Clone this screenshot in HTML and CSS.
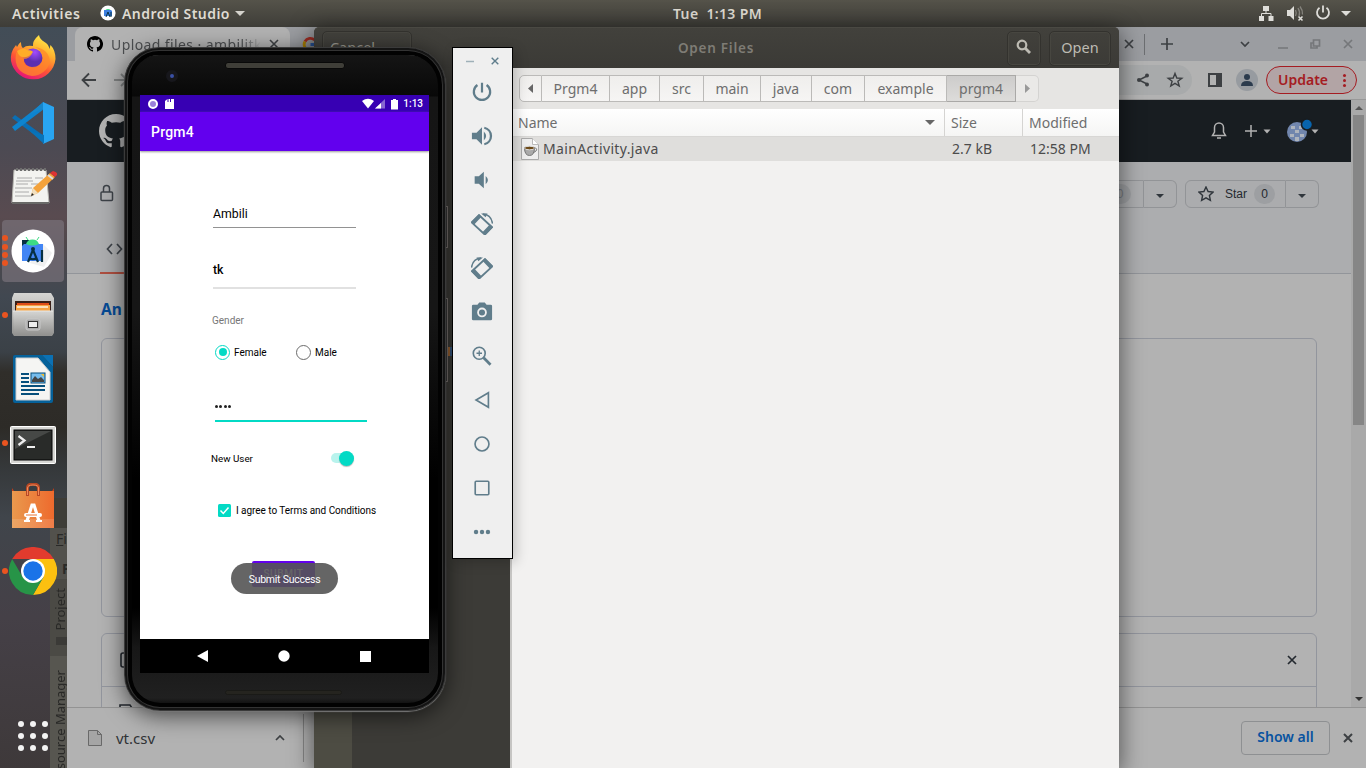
FILE: index.html
```html
<!DOCTYPE html>
<html lang="en">
<head>
<meta charset="utf-8">
<title>Desktop</title>
<link rel="stylesheet" href="styles.css">
</head>
<body>
<div class="desktop">

  <header class="topbar">
    <span class="activities">Activities</span>
    <svg class="app-ico" width="16" height="16" viewBox="0 0 16 16"><circle cx="8" cy="8" r="7.6" fill="#fff"/><path d="M4 5h7l1 1v5H4z" fill="#3d7fe0"/><path d="M5.5 5a3 2.5 0 0 1 5 0z" fill="#3ddc84"/><path d="M6 12l2-5 2 5M11 7v5" stroke="#073042" fill="none"/></svg>
    <span class="appname">Android Studio</span>
    <svg class="caret" width="10" height="5"><path d="M0 0h10L5 5z" fill="#d5d3cd"/></svg>
    <span class="clock">Tue&nbsp; 1:13 PM</span>
    <svg class="tray" width="100" height="20" viewBox="1254 3 100 20" fill="#deddd9" stroke="none">
      <path d="M1263 6h6v5h-6zM1259 16h5v5h-5zM1268.500 16h5v5h-5z"/><path d="M1266 11v3M1261.500 16v-2.500h9.500V16" fill="none" stroke="#deddd9"/>
      <path d="M1287 10h3l4-4v14l-4-4h-3z"/><path d="M1295.500 10q1.500 3 0 6M1298 8q2.500 4 1 8M1300 6.500q3 4 2.500 8" fill="none" stroke="#85837d" stroke-width="1.300"/><path d="M1298.500 16.500l4 4M1302.500 16.500l-4 4" stroke="#deddd9" stroke-width="1.600"/>
      <path d="M1319.500 7.800a6 6 0 1 0 7 0M1323 5.500v7" fill="none" stroke="#deddd9" stroke-width="1.800"/><path d="M1341 11h10l-5 5z"/>
    </svg>
  </header>

  <section class="ide">
    <span class="menu"><u>F</u>ile</span>
    <b class="crumb">P</b>
    <div class="side"><span class="vert project">Project</span><i class="folder"></i></div>
    <div class="side2"><span class="vert">Resource Manager</span></div>
  </section>

  <nav class="dock">
    <div class="slot"><svg viewBox="9 35 48 48"><defs><linearGradient id="ff" x1=".8" y1="0" x2=".3" y2="1"><stop offset="0" stop-color="#fff44f"/><stop offset=".35" stop-color="#ffb02e"/><stop offset=".65" stop-color="#ff5634"/><stop offset="1" stop-color="#e3107c"/></linearGradient><radialGradient id="ffp" cx=".6" cy=".2"><stop offset="0" stop-color="#a44bff"/><stop offset="1" stop-color="#5b2fb0"/></radialGradient></defs><path d="M39 35q-7 6-6 11-7-1-10 2-2-1-2-6-2 1-4 5l-1-2q-6 7-5 16a22.500 22.500 0 0 0 44.500-2q0-9-5-14l-1 4q-1-5-5-7-5-3-5.500-7z" fill="url(#ff)"/><circle cx="33" cy="58" r="9.500" fill="url(#ffp)"/><path d="M16 53q5-4 9-1 5 0 7 2-3 5-8 5-1 7 8 8 9 0 11-9-1-8-8-11 14 2 15 15a19 19 0 0 1-18 14Q13 73 16 53z" fill="#ff8a2a" opacity=".75"/><path d="M17 51q6-4 10-1 5 0 6 2-4 6-10 5-4 0-6-6z" fill="#ffad28"/></svg></div>
    <div class="slot"><svg viewBox="9 99 48 48"><path d="M12 118l3-3 29 21v6z" fill="#0a6fb5"/><path d="M12 127l3 4 29-22v-7z" fill="#0d84cf"/><path d="M43 102l11 5v32l-11 5z" fill="#29a5f1"/><path d="M43 102L30 114l13-5z" fill="#1687cc"/><path d="M30 131l14 13v-9z" fill="#0874ba"/></svg></div>
    <div class="slot"><svg viewBox="9 163 48 48"><path d="M14 170h32l3 33H12z" fill="#f3f3f0" stroke="#b7b7b1"/><path d="M12 203h37" stroke="#696967" stroke-width="2"/><path d="M17 171v-4M21 171v-4M25 171v-4M29 171v-4M33 171v-4M37 171v-4M41 171v-4M45 171v-4" stroke="#6d6d6d" stroke-width="2" stroke-dasharray="3 1"/><path d="M17 178h15m3 0h8M16 181h17M16 184h12m3 0h7M15 188h17M15 192h14M15 196h17" stroke="#aaa"/><path d="M31 196l2-8 17-15 5 4-17 16z" fill="#f3a23b"/><path d="M31 196l2-8 5 5z" fill="#f1dfbf"/><path d="M50 173l3-2q5 1 4 4l-2 2z" fill="#d33"/><path d="M48 175l5 4" stroke="#ddd" stroke-width="2"/><path d="M31 196l1-3 2 2z" fill="#222"/></svg></div>
    <div class="slot active"><i class="pips four"></i><svg viewBox="9 227 48 48"><circle cx="33" cy="251" r="21.500" fill="#fff"/><path d="M43 244l9 9-8 14-14-4z" fill="#f0f0f0"/><path d="M22 240h7l2 3-4 8-5-2z" fill="#073042"/><path d="M22 246l2-2h19v17H22z" fill="#4285f4"/><path d="M26 244a7 7 0 0 1 13 0q-7 3-13 0z" fill="#3ddc84"/><path d="M28 240l-2-3M37 240l2-3" stroke="#3ddc84"/><path d="M28 262l4.500-11h1l4.500 11M29 258q4 2.500 8 0M42 250v12" fill="none" stroke="#073042" stroke-width="2.200"/><circle cx="33" cy="249" r="2" fill="#073042"/></svg></div>
    <div class="slot"><i class="pips"></i><svg viewBox="9 291 48 48"><defs><linearGradient id="cab" x2="0" y2="1"><stop stop-color="#d5d5d3"/><stop offset="1" stop-color="#929290"/></linearGradient></defs><path d="M14 293h37l3 5v35l-2 3H14l-2-3v-35z" fill="url(#cab)"/><path d="M15 301h36v10H15z" fill="#3a2018"/><path d="M17 303h32v8H17z" fill="#df4d18"/><path d="M16 305h34v6H16z" fill="#f6a344"/><path d="M17 306h31v2H17z" fill="#fbe1bc"/><path d="M13 311h40v24H14z" fill="url(#cab)"/><path d="M13 311h40" stroke="#e8e8e6"/><rect x="26" y="319" width="14" height="11" rx="2" fill="#aaa" stroke="#c8c8c8"/><rect x="28.500" y="321.500" width="9" height="6" fill="#eee" stroke="#333"/></svg></div>
    <div class="slot"><svg viewBox="9 355 48 48"><path d="M15 355h27l11 12v34q0 2-2 2H15q-2 0-2-2v-44q0-2 2-2z" fill="#05619a"/><path d="M42 355h11v12z" fill="#0b71b4"/><path d="M16 358h22l12 14v28H16z" fill="#f5f5f3" stroke="#ccc"/><path d="M21 374h8M21 378h8M21 382h8M21 386h24M21 390h24M21 394h18" stroke="#064f7c" stroke-width="2"/><rect x="31" y="373" width="14" height="10" fill="#76bcec" stroke="#064f7c"/><path d="M32 382v-2l3-4 3 3 3-2 3 3v2z" fill="#444"/><path d="M41 374h3v3z" fill="#f4bd29"/></svg></div>
    <div class="slot"><i class="pips"></i><svg viewBox="9 418 48 48"><rect x="10.500" y="425.500" width="45" height="37" rx="1" fill="#d7d7d4" stroke="#fff"/><rect x="14" y="429" width="38" height="30" fill="#292b29" stroke="#050505"/><path d="M15 430h36L15 448z" fill="#464846"/><path d="M18.500 435l6 4.500-6 4.500" fill="none" stroke="#eee" stroke-width="2.200"/><path d="M27 446h8" stroke="#eee" stroke-width="2"/></svg></div>
    <div class="slot"><svg viewBox="9 482 48 48"><defs><linearGradient id="bag"><stop stop-color="#e9994e"/><stop offset="1" stop-color="#ee6a2d"/></linearGradient></defs><path d="M12 487l2 3h38l2-3v8H12z" fill="#c33d16"/><path d="M12 490h42v37H12z" fill="url(#bag)"/><path d="M12 518h42v9H12z" fill="#fff" opacity=".13"/><path d="M27.500 495v-8q0-4 5.500-4t5.500 4v8" fill="none" stroke="#b84824" stroke-width="3"/><path d="M27.500 494v-7q0-3 5.500-3t5.500 3v7" fill="none" stroke="#ef8b5b"/><path d="M27 520l5-16h2l5 16" fill="none" stroke="#fff" stroke-width="3.200"/><rect x="24" y="512" width="18" height="4" rx="2" fill="#fff"/><path d="M24 520h6m6 0h6" stroke="#fff" stroke-width="2"/><path d="M26 514h11" stroke="#e87437"/></svg></div>
    <div class="slot"><i class="pips"></i><svg viewBox="9 547 48 48"><path d="M12.200 559A24 24 0 0 1 53.800 559H33z" fill="#e23b2e"/><path d="M53.800 559A24 24 0 0 1 33 595l10.400-18L33 559z" fill="#fcc010"/><path d="M12.200 559A24 24 0 0 0 33 595l10.400-18H22.600z" fill="#279447"/><circle cx="33" cy="571" r="12" fill="#fff"/><circle cx="33" cy="571" r="9.700" fill="#1a73e8"/></svg></div>
    <div class="apps"><i></i><i></i><i></i><i></i><i></i><i></i><i></i><i></i><i></i></div>
  </nav>

  <section class="browser">
    <div class="tabs">
      <div class="tab"><svg width="16" height="16" viewBox="0 0 16 16"><use href="#octo"/></svg><span>Upload files · ambilitk</span><svg width="10" height="10"><path d="M1 1l8 8M9 1l-8 8" stroke="#3d4043" stroke-width="1.600"/></svg></div>
      <svg class="g" width="17" height="17" viewBox="0 0 17 17" fill="none" stroke-width="2.800"><path d="M3 5.500A6 6 0 0 1 12.500 4" stroke="#a82f25"/><path d="M3 5.500a6 6 0 0 0 0 6" stroke="#b08504"/><path d="M3 11.500a6 6 0 0 0 9.500 1" stroke="#23753a"/><path d="M8.500 8.500h6q0 3-2 4.500" stroke="#2d5dab"/></svg>
      <svg class="tabctl" width="247" height="34" viewBox="1119 27 247 34" fill="none" stroke="#3d4043" stroke-width="1.700"><path d="M1125 40l8 8M1133 40l-8 8"/><path d="M1144.500 34v21" stroke="#6c6e71" stroke-width="1"/><path d="M1161 44h12M1167 38v12M1241 42l4 4 4-4"/><path d="M1278 48h10M1344 40l8 8M1352 40l-8 8" stroke="#75777a"/><path d="M1313.500 40h6v6h-6zM1313 43h-2v5h6v-2" stroke="#75777a"/></svg>
    </div>
    <div class="tools">
      <svg width="60" height="38" viewBox="67 61 60 38" fill="none" stroke-width="1.800"><path d="M96 80H83M89 73.500L82.500 80l6.500 6.500" stroke="#3d4043"/><path d="M114 80h13M121 74l6 6-6 6" stroke="#7e8081"/></svg>
      <svg class="tool-right" width="142" height="38" viewBox="1119 61 142 38"><path d="M1119 65h58a15 15 0 0 1 0 30h-58z" fill="#a8aaab"/><path d="M1147 76l-8 4 8 4" stroke="#3d4043" fill="none" stroke-width="1.500"/><circle cx="1139" cy="80" r="2" fill="#3d4043"/><circle cx="1147" cy="75.500" r="2" fill="#3d4043"/><circle cx="1147" cy="84.500" r="2" fill="#3d4043"/><path d="M1175 73.500l1.800 4.500 5 .3-3.900 3 1.300 4.700-4.200-2.700-4.200 2.700 1.300-4.700-3.900-3 5-.3z" fill="none" stroke="#3d4043" stroke-width="1.400"/><path d="M1209 74h12v12h-12zM1217 74h4v12h-4z" fill="none" stroke="#3d4043" stroke-width="2"/><path d="M1217 74h4v12h-4z" fill="#3d4043"/><circle cx="1247" cy="80" r="11" fill="#979ba0"/><circle cx="1247" cy="77" r="3" fill="#2b3b4d"/><path d="M1241 86q0-5 6-5t6 5z" fill="#2b3b4d"/></svg>
      <span class="update">Update<i></i></span>
    </div>
    <div class="page">
      <div class="site">
        <div class="gh">
          <svg width="34" height="34" viewBox="0 0 16 16" fill="#b2b2b2"><path id="octo" d="M8 0C3.580 0 0 3.580 0 8c0 3.540 2.290 6.530 5.470 7.590.4.070.55-.17.55-.38 0-.19-.01-.82-.01-1.490-2.010.37-2.530-.49-2.690-.94-.09-.23-.48-.94-.82-1.130-.28-.15-.68-.52-.01-.53.630-.01 1.080.58 1.230.82.720 1.210 1.870.87 2.330.66.070-.52.280-.87.510-1.070-1.780-.2-3.640-.89-3.640-3.950 0-.87.310-1.590.82-2.150-.08-.2-.36-1.020.08-2.120 0 0 .67-.21 2.200.82a7.600 7.600 0 0 1 4 0c1.530-1.040 2.200-.82 2.200-.82.440 1.100.160 1.920.080 2.120.51.560.82 1.270.82 2.150 0 3.070-1.870 3.750-3.650 3.950.29.250.54.730.54 1.480 0 1.070-.01 1.930-.01 2.200 0 .21.150.46.550.38A8 8 0 0 0 8 0z"/></svg>
          <svg class="gh-right" width="120" height="40" viewBox="1204 111 120 40" fill="none" stroke="#b2b2b2" stroke-width="1.500"><path d="M1212.500 135.500h13l-2-3.500v-4.500a4.500 4.500 0 0 0-9 0v4.500zM1217 138h4"/><path d="M1245 131h12M1251 125v12"/><path d="M1263.500 129.500h7l-3.500 4zM1311.500 129.500h7l-3.500 4z" fill="#b2b2b2" stroke="none"/><circle cx="1297" cy="132" r="10" fill="#7186ad" stroke="none"/><path d="M1291 126h4v3h-4zM1299 126h4v3h-4zM1295 130h4v3h-4zM1290 134h4v3h-4zM1300 134h4v3h-4zM1295 137h4v4h-4z" fill="#aeb4bd" stroke="none"/><circle cx="1307" cy="124.500" r="5.500" fill="#0864ad" stroke="#181d21"/></svg>
        </div>
        <div class="repo">
          <div class="repo-top">
            <svg class="lock" width="14" height="18" fill="none" stroke="#3d4248" stroke-width="1.500"><rect x="1" y="8" width="11.500" height="8.500" rx="1"/><path d="M3.500 8V4.500a3 3 0 0 1 6 0V8"/></svg>
            <div class="btns"><div class="btn fork"><span class="pill">0</span></div><div class="btn drop"><i></i></div><div class="btn star"><svg width="16" height="16" viewBox="0 0 16 16" fill="none" stroke="#30363c" stroke-width="1.400"><path d="M8 1l2.100 4.500 4.900.6-3.600 3.300 1 4.900L8 11.900l-4.400 2.400 1-4.900L1 6.100l4.900-.6z"/></svg><span>Star</span><span class="pill">0</span></div><div class="btn drop"><i></i></div></div>
          </div>
          <div class="code"><svg width="18" height="12" fill="none" stroke="#3d4248" stroke-width="1.700"><path d="M6 1L1.500 6 6 11M11 1l4.500 5-4.500 5"/></svg></div>
        </div>
        <b class="owner">An</b>
        <div class="box drop-zone"></div>
        <div class="box notice"><div class="notice-row"><svg width="12" height="16" fill="none" stroke="#24292f" stroke-width="1.600"><rect x="1" y="1" width="13" height="14" rx="2"/></svg><svg width="10" height="10"><path d="M1 1l8 8M9 1l-8 8" stroke="#24292f" stroke-width="1.700"/></svg></div><svg class="file-top" width="14" height="4"><path d="M1 4V1h10l2 3" fill="none" stroke="#24292f" stroke-width="1.600"/></svg></div>
      </div>
      <div class="scroll"><i class="up"></i><b></b><i class="down"></i></div>
    </div>
    <div class="shelf">
      <svg width="14" height="16"><path d="M.5.500h9l4 4v11H.5z" fill="#a5a5a5" stroke="#696969"/><path d="M9.500.500v4h4" fill="none" stroke="#696969"/></svg>
      <span class="csv">vt.csv</span>
      <svg class="chev" width="10" height="6"><path d="M1 5l4-4 4 4" fill="none" stroke="#3d4043" stroke-width="1.700"/></svg><i class="rule"></i>
      <span class="showall">Show all</span>
      <svg class="close" width="10" height="10"><path d="M1 1l8 8M9 1l-8 8" stroke="#3d4043" stroke-width="2"/></svg>
    </div>
  </section>

  <section class="dialog">
    <div class="dhead"><span class="dbtn cancel">Cancel</span><b>Open Files</b><span class="dbtn find"><svg width="16" height="16" fill="none" stroke="#bdbbb3"><circle cx="6" cy="6" r="4.300" stroke-width="2.200"/><path d="M9 9l5 5" stroke-width="2.800"/></svg></span><span class="dbtn open">Open</span></div>
    <div class="dbody">
      <div class="strip"></div>
      <div class="files">
        <div class="path"><span class="w22"><svg width="5" height="9"><path d="M5 0v9L0 4.500z" fill="#666"/></svg></span><span class="w68">Prgm4</span><span class="w50">app</span><span class="w44">src</span><span class="w57">main</span><span class="w51">java</span><span class="w53">com</span><span class="w82">example</span><span class="w69 on">prgm4</span><span class="w22 last"><svg width="5" height="9"><path d="M0 0v9l5-4.500z" fill="#999"/></svg></span></div>
        <div class="cols"><span class="c1">Name<svg width="10" height="5"><path d="M0 0h10L5 5z" fill="#666"/></svg></span><span class="c2">Size</span><span class="c3">Modified</span></div>
        <div class="row"><svg width="18" height="22"><path d="M.5.500h11l6 6v15H.5z" fill="#eee" stroke="#aaa"/><path d="M11.500.500v6h6" fill="#fff" stroke="#bbb"/><path d="M3.500 9.500h10q0 8-5 8t-5-8z" fill="#aaa" stroke="#777"/><ellipse cx="8.500" cy="10" rx="5" ry="1.800" fill="#6d4a18" stroke="#ddd"/><path d="M13 10q4 0 2 3l-3 2" fill="none" stroke="#777"/></svg><span class="fname">MainActivity.java</span><span class="fsize">2.7 kB</span><span class="ftime">12:58 PM</span></div>
      </div>
    </div>
  </section>

  <i class="key k1"></i><i class="key k2"></i><i class="peek"></i>
  <section class="phone">
    <div class="speaker"></div><i class="cam"></i>
    <div class="screen">
      <div class="status"><svg width="28" height="12"><circle cx="6" cy="6" r="4" fill="#9a80da" stroke="#fff" stroke-width="2"/><path d="M18 3l2.500-2H27v10h-9z" fill="#fff"/><path d="M21 1v3M23.500 1v3" stroke="#3700b3"/></svg><svg class="stat-r" width="38" height="12" fill="#fff"><path d="M1 3q6-4.500 12 0L7 10.500z"/><path d="M24 1v9.500H14z" opacity=".4"/><path d="M20 5v5.500h-6z"/><path d="M30 2h2V1h3v1h2v9.500h-7z"/></svg><span>1:13</span></div>
      <div class="appbar">Prgm4</div>
      <div class="form">
        <div class="field f1">Ambili</div>
        <div class="field f2">tk</div>
        <div class="gender">Gender</div>
        <div class="radios"><i class="radio on"></i><span class="female">Female</span><i class="radio"></i><span>Male</span></div>
        <div class="field pw"><i></i><i></i><i></i><i></i></div>
        <div class="newuser"><span>New User</span><i class="switch"><b></b></i></div>
        <div class="agree"><svg width="13" height="13"><rect width="13" height="13" rx="1.500" fill="#03dac5"/><path d="M2.500 6.500L5.300 9.500l5.200-6" fill="none" stroke="#fff" stroke-width="1.500"/></svg><span>I agree to Terms and Conditions</span></div>
        <div class="submit">SUBMIT</div>
        <div class="toast">Submit Success</div>
      </div>
      <div class="navbar"><svg width="11" height="12"><path d="M11 0v12L0 6z" fill="#fff"/></svg><svg width="12" height="12"><circle cx="6" cy="6" r="5.700" fill="#fff"/></svg><svg width="11" height="11"><path d="M0 0h11v11H0z" fill="#fff"/></svg></div>
    </div>
    <div class="speaker low"></div>
  </section>

  <aside class="emu">
    <div class="winctl"><svg width="8" height="8"><path d="M0 4.500h8" stroke="#9fb0b8" stroke-width="1.500"/></svg><svg width="8" height="8"><path d="M.7.700l6.600 6.600M7.300.700L.7 7.300" stroke="#5f7d8c" stroke-width="1.400"/></svg></div>
    <svg viewBox="0 0 24 24" class="s"><path stroke-width="2.400" d="M7 4.400a8.900 8.900 0 1 0 10 0M12 2v10.500"/></svg>
    <svg viewBox="0 0 24 24"><path d="M1 8.500h5l6-6v19l-6-6H1zM14 7q5 5 0 10z"/><path d="M14.500 3a9.200 9.200 0 0 1 0 18" fill="none" stroke="#607d8b" stroke-width="2.500"/></svg>
    <svg viewBox="0 0 24 24"><path d="M4 8h4.500l5.500-5v18l-5.500-5H4zM16 7.500q5 4.500 0 9z"/></svg>
    <svg viewBox="0 0 24 24"><path d="M1 10.500l8-8 14 13-8 8z" fill="none" stroke="#607d8b" stroke-width="2"/><path d="M0 9.500l8.500-8.500 3 3-8.500 9zM12.500 21l8-8.500 3.500 3-8.500 9z"/><path d="M13 1q9 .5 10.500 10.500" fill="none" stroke="#607d8b" stroke-width="1.600"/><path d="M11 .5h7l-2 4z"/></svg>
    <svg viewBox="0 0 24 24"><g transform="matrix(-1 0 0 1 24 0)"><path d="M1 10.500l8-8 14 13-8 8z" fill="none" stroke="#607d8b" stroke-width="2"/><path d="M0 9.500l8.500-8.500 3 3-8.500 9zM12.500 21l8-8.500 3.500 3-8.500 9z"/><path d="M13 1q9 .5 10.500 10.500" fill="none" stroke="#607d8b" stroke-width="1.600"/><path d="M11 .5h7l-2 4z"/></g></svg>
    <svg viewBox="0 0 24 24"><path d="M2.500 4H7l2-2.500h6L17 4h4.500q1.500 0 1.500 1.500v14q0 1.500-1.500 1.500h-19Q1 21 1 19.500v-14Q1 4 2.500 4z"/><circle cx="12" cy="12.500" r="4.300" stroke="#efefef" stroke-width="2"/></svg>
    <svg viewBox="0 0 24 24" class="s"><circle cx="9" cy="9" r="6.500"/><path d="M13.800 14l7.500 7.500" stroke-width="3"/><path d="M9 6v6M6 9h6" stroke-width="1.400"/></svg>
    <svg viewBox="0 0 24 24" class="s"><path d="M19 4v16L5.500 12z"/></svg>
    <svg viewBox="0 0 24 24" class="s"><circle cx="12" cy="12" r="7.600"/></svg>
    <svg viewBox="0 0 24 24" class="s"><rect x="4.600" y="4.600" width="14.800" height="14.800" rx="1"/></svg>
    <svg viewBox="0 0 24 24"><circle cx="5.500" cy="12" r="2.400"/><circle cx="12" cy="12" r="2.400"/><circle cx="18.500" cy="12" r="2.400"/></svg>
  </aside>
</div>
</body>
</html>
```
FILE: styles.css
```css
* { box-sizing: border-box; }
body { margin: 0; font-family: "Noto Sans", "Open Sans", sans-serif; font-size: 14px; }
svg { display: block; flex: none; }
span, b { white-space: nowrap; }
.desktop { position: relative; width: 1366px; height: 768px; overflow: hidden; background: linear-gradient(#424d57 0, #4c4a53 120px, #594b50 190px, #50484c 215px, #414851 270px, #3b4147 325px, #302e2a 345px, #2d2b27 400px, #35383a 440px, #40454b 490px, #454047 590px, #3e393a 741px) 0 27px / 67px 741px no-repeat, #3f3e39; }

/* top panel */
.topbar { position: absolute; inset: 0 0 auto 0; height: 27px; display: flex; align-items: center; background: linear-gradient(#55534a, #3e3d38); color: #dfdbd2; font-weight: 600; font-size: 14px; padding-bottom: 1px; }
.activities { width: 88px; padding-left: 12px; letter-spacing: .6px; }
.app-ico { margin-left: 12px; margin-right: 6px; }
.appname { width: 108px; letter-spacing: .45px; }
.caret { margin-left: 5px; }
.clock { margin-left: 428px; width: 94px; letter-spacing: .35px; }
.tray { margin-left: auto; margin-right: 12px; }

/* launcher */
.dock { position: absolute; left: 0; top: 27px; width: 67px; height: 741px; }
.slot { height: 64px; display: flex; align-items: center; padding-left: 9px; position: relative; }
.slot svg { width: 48px; height: 48px; }
.slot.active { margin: 1px 3px 1px 2px; height: 62px; padding-left: 7px; background: rgba(125,117,126,.65); border-radius: 4px; }
.pips { position: absolute; left: 2px; top: 29px; width: 6px; height: 6px; border-radius: 3px; background: #e95420; }
.pips.four { left: 0; top: 15px; box-shadow: 0 9px #e95420, 0 17px #e95420, 0 25px #e95420; }
.apps { display: grid; grid-template-columns: repeat(3, 6px); gap: 6px; padding: 118px 0 0 18px; }
.apps i { width: 6px; height: 6px; border-radius: 3px; background: #f3f3f3; }

.ide { position: absolute; left: 50px; top: 498px; width: 17px; height: 270px; overflow: hidden; border-top: 30px solid #3e3d37; background: #52514c; color: #292927; display: flex; flex-direction: column; }
.menu { padding-left: 6px; line-height: 22px; height: 29px; }
.crumb { padding-left: 12px; height: 22px; line-height: 24px; }
.side { border-top: 1px solid #494843; height: 78px; background: #4b4a45; display: flex; flex-direction: column; padding-top: 8px; }
.vert { writing-mode: vertical-rl; transform: rotate(180deg); font-size: 13px; line-height: 17px; width: 17px; margin-left: 2px; }
.folder { width: 11px; height: 8px; margin: 7px 0 0 6px; background: #3b3a37; }
.side2 { height: 112px; flex: none; padding-top: 14px; background: #575650; }

/* dimmed browser window */
.browser { position: absolute; left: 67px; top: 27px; width: 1299px; height: 741px; display: flex; flex-direction: column; background: #b2b2b2; }
.tabs { height: 34px; background: #9b9da1; display: flex; align-items: center; padding-left: 8px; }
.tab { width: 215px; height: 34px; border-radius: 8px 8px 0 0; background: #b2b2b2; display: flex; align-items: center; gap: 8px; padding-left: 12px; color: #4c4e50; font-size: 14px; letter-spacing: .4px; }
.tab span { width: 150px; overflow: hidden; -webkit-mask: linear-gradient(90deg, #000 130px, transparent); }
.g { margin-left: 12px; }
.tabctl { margin-left: auto; }
.tools { height: 39px; display: flex; align-items: center; border-bottom: 1px solid #989898; }
.tool-right { margin-left: auto; }
.update { width: 91px; height: 28px; margin: 0 9px 0 5px; padding-left: 11px; border: 1px solid #a51c22; border-radius: 14px; background: #b2a4a5; color: #a51c22; font-size: 14px; font-weight: 600; line-height: 26px; display: flex; align-items: center; }
.update i { margin-left: auto; margin-right: 10px; width: 3px; height: 3px; border-radius: 50%; background: #a51c22; box-shadow: 0 5px #a51c22, 0 -5px #a51c22; }
.page { height: 607px; display: flex; }
.site { width: 1284px; overflow: hidden; }
.gh { height: 62px; background: #181d21; display: flex; align-items: center; padding-left: 32px; }
.gh-right { margin-left: auto; margin-right: 27px; }
.repo { height: 112px; background: #acadaf; border-bottom: 1px solid #92959a; }
.repo-top { display: flex; align-items: center; height: 64px; padding: 0 32px 0 33px; }
.lock { margin-bottom: 3px; }
.btns { margin-left: auto; display: flex; }
.btn { height: 28px; border: 1px solid #929497; background: #abacae; display: flex; align-items: center; justify-content: center; color: #24292f; font: 500 12px "Liberation Sans", sans-serif; }
.fork { width: 60px; border-radius: 6px 0 0 6px; justify-content: flex-end; padding-right: 12px; color: #777b80; }
.star { width: 101px; border-radius: 6px 0 0 6px; gap: 7px; padding-left: 2px; }
.star span:nth-child(2) { margin-left: 4px; }
.drop { width: 33px; border-left: 0; border-radius: 0 6px 6px 0; }
.fork + .drop { margin-right: 8px; }
.drop i { border: 4px solid transparent; border-top-color: #30363c; margin-top: 3px; border-bottom: 0; }
.pill { height: 20px; width: 21px; border-radius: 10px; background: #9d9fa2; line-height: 20px; text-align: center; }
.fork .pill { width: 22px; }
.code { width: 30px; margin-left: 33px; height: 48px; border-bottom: 2px solid #ae4f40; display: flex; align-items: center; padding-left: 6px; }
.owner { display: block; color: #064a94; font-size: 15.500px; line-height: 22px; margin: 24px 0 0 34px; }
.box { width: 1216px; margin-left: 34px; border: 1px solid #92959d; border-radius: 6px; }
.drop-zone { height: 279px; margin-top: 18px; }
.notice { height: 100px; margin-top: 16px; }
.notice-row { height: 53px; border-bottom: 1px solid #92959d; display: flex; align-items: center; justify-content: space-between; padding: 0 19px 0 18px; }
.file-top { margin: 17px 0 0 17px; }
.scroll { width: 15px; background: #a9a9a9; display: flex; flex-direction: column; align-items: center; justify-content: space-between; padding: 6px 0; }
.scroll i { border: 4px solid transparent; }
.scroll .up { border-top: 0; border-bottom-color: #555; }
.scroll .down { border-bottom: 0; border-top-color: #333; }
.scroll b { width: 11px; height: 310px; background: #868686; margin-bottom: auto; margin-top: 5px; }
.shelf { height: 61px; border-top: 1px solid #939393; display: flex; align-items: center; padding-left: 21px; }
.csv { width: 60px; margin-left: 14px; font-size: 15px; color: #303336; padding-bottom: 1px; }
.chev { margin-left: 99px; }
.rule { height: 48px; width: 1px; background: #858585; margin-left: 18px; }
.showall { margin-left: auto; width: 89px; height: 34px; border: 1px solid #8e9092; border-radius: 4px; color: #0752a0; font-size: 14px; font-weight: 600; line-height: 30px; text-align: center; }
.close { margin: 0 13px 0 13px; }

/* open dialog */
.dialog { position: absolute; left: 314px; top: 27px; width: 805px; height: 741px; border-radius: 6px 6px 0 0; box-shadow: 0 4px 22px 2px rgba(0,0,0,.5); background: #3c3b37; }
.dhead { height: 41px; border-radius: 5px 5px 0 0; border-top: 1px solid #4a4943; background: linear-gradient(#42413c, #3b3a36); display: flex; align-items: center; color: #7e7c75; }
.dbtn { height: 35px; border: 1px solid #33322e; border-radius: 5px; display: flex; align-items: center; justify-content: center; box-shadow: inset 0 0 0 1px #474640; color: #bdbbb3; font-size: 14.500px; padding-bottom: 2px; }
.cancel { width: 90px; margin-left: 8px; padding-right: 29px; color: #98968e; }
.dhead b { width: 78px; margin-left: 266px; font-size: 13.500px; font-weight: 600; letter-spacing: .75px; }
.find { width: 34px; margin-left: auto; }
.open { width: 62px; margin: 0 8px; }
.dbody { display: flex; height: 700px; }
.strip { width: 38px; background: #4d4c43; }
.files { width: 609px; margin-left: auto; border-left: 2px solid #c6c5c3; background: #f2f1f0; color: #6e6e6e; font-size: 14px; }
.path { height: 41px; background: #e6e5e3; display: flex; align-items: center; padding-left: 7px; }
.path span { height: 27px; display: flex; align-items: center; justify-content: center; background: linear-gradient(#efeeec, #f6f5f4); border: 1px solid #bbbab8; border-left-width: 0; }
.path span:first-child { border-left-width: 1px; border-radius: 5px 0 0 5px; }
.path .on { background: linear-gradient(#cdcccb, #dddcda); border-color: #aaa9a7; }
.path .last { border-radius: 0 5px 5px 0; border-color: #d4d3d1; background: #eae9e7; }
.w22 { width: 23px; } .w68 { width: 68px; } .w50 { width: 50px; } .w44 { width: 44px; } .w57 { width: 57px; } .w51 { width: 51px; } .w53 { width: 53px; } .w82 { width: 82px; } .w69 { width: 69px; }
.cols { height: 28px; display: flex; background: linear-gradient(#fff, #f5f5f4); border-bottom: 1px solid #d8d7d5; line-height: 27px; }
.c1 { width: 433px; padding-left: 6px; display: flex; align-items: center; border-right: 1px solid #d5d4d2; }
.c1 svg { margin-left: auto; margin-right: 9px; }
.c2 { width: 78px; padding-left: 6px; border-right: 1px solid #d5d4d2; }
.c3 { padding-left: 6px; }
.row { height: 24px; background: #dfdedc; display: flex; align-items: center; padding-left: 9px; color: #4c4c4c; }
.row span { padding-bottom: 2px; }
.row .fname { width: 400px; padding-left: 4px; letter-spacing: .35px; }
.row .fsize { width: 78px; padding-left: 13px; }
.row .ftime { padding-left: 13px; }

/* emulator */
.key { position: absolute; left: 445px; width: 3px; border: 1px solid #77716d; background: #292929; }
.k1 { top: 206px; height: 42px; } .k2 { top: 298px; height: 84px; }
.peek { position: absolute; left: 448px; top: 347px; width: 4px; height: 9px; background: linear-gradient(90deg, #986030 2px, #36557a 2px); }
.phone { position: absolute; left: 124px; top: 47px; width: 322px; height: 664px; border: 1px solid #3a3a3a; border-radius: 35px 38px 38px 36px; background: linear-gradient(#171717 0, #080808 48px, #151515 49px, #161616 260px, #000 430px, #000 560px, #171717 600px, #202020 650px, #000); box-shadow: inset 0 0 0 2px #141414, inset 0 0 0 3px #333, inset 0 0 0 7px #020202, inset 0 8px 0 -1px #5a5a5a, 0 1px 1px #777, 0 5px 22px rgba(0,0,0,.6); display: flex; flex-direction: column; }
.speaker { width: 120px; height: 7px; margin: 14px 0 0 100px; border: 1px solid #090909; border-radius: 3px; background: #3f3e38; }
.cam { width: 12px; height: 12px; margin: 1px 0 0 41px; border-radius: 50%; border: 4px solid #17171c; background: #3a50a5; }
.screen { width: 289px; height: 578px; margin: 13px 0 0 15px; display: flex; flex-direction: column; background: #fff; font-family: Roboto, sans-serif; overflow: hidden; }
.status { height: 17px; background: #3700b3; display: flex; align-items: center; padding: 0 6px 0 7px; color: #fff; font-size: 10px; font-weight: 500; }
.stat-r { margin-left: auto; margin-right: 4px; }
.appbar { height: 39px; flex: none; background: #6200ee; color: #fff; font-size: 14px; font-weight: 500; line-height: 40px; padding-left: 11px; box-shadow: 0 1px 2px #999; letter-spacing: .2px; }
.form { position: relative; height: 488px; display: flex; flex-direction: column; color: #000; font-size: 10px; }
.field { display: flex; align-items: flex-end; width: 143px; margin-left: 73px; font-size: 12.300px; }
.f1 { height: 77px; border-bottom: 1px solid #929292; padding-bottom: 6px; }
.f2 { height: 61px; border-bottom: 2px solid #e1e1e1; padding-bottom: 10px; font-weight: 500; }
.gender { height: 47px; padding: 16px 0 0 72px; line-height: 32px; color: #777; }
.radios { height: 32px; display: flex; align-items: center; padding-left: 75px; }
.radio { width: 15px; height: 15px; border: 1.500px solid #6b6b6b; border-radius: 50%; margin-right: 4px; display: flex; align-items: center; justify-content: center; }
.radio.on { border-color: #03dac5; }
.radio.on::after { content: ""; width: 8px; height: 8px; border-radius: 50%; background: #03dac5; }
.female { width: 62px; }
.pw { width: 152px; margin-left: 75px; height: 54px; border-bottom: 2px solid #03dac5; gap: 1.300px; padding: 0 0 12px 0; }
.pw i { width: 3px; height: 3px; border-radius: 50%; background: #222; }
.newuser { height: 72px; display: flex; align-items: center; padding-left: 71px; }
.newuser span { width: 120px; font-size: 9.800px; }
.switch { width: 23px; height: 10px; border-radius: 5px; background: #b9f3ed; display: flex; align-items: center; justify-content: flex-end; }
.switch b { width: 15px; height: 15px; border-radius: 50%; background: #03dac5; flex: none; box-shadow: 0 1px 1px #bbb; }
.agree { height: 32px; display: flex; align-items: center; padding-left: 78px; gap: 5px; letter-spacing: -.04px; }
.submit { width: 63px; height: 26px; margin: 35px 0 0 112px; border-radius: 2px; background: #6200ee; color: #fff; text-align: center; line-height: 26px; font-size: 10px; font-weight: 500; letter-spacing: .6px; }
.toast { position: absolute; left: 91px; top: 412px; width: 107px; height: 31px; border-radius: 16px; background: rgba(84,84,84,.9); color: #fff; line-height: 33px; text-align: center; font-size: 10.500px; letter-spacing: -.25px; }
.navbar { height: 34px; background: #000; display: flex; align-items: center; justify-content: space-between; padding: 0 58px 0 57px; }
.low { height: 5px; width: 117px; margin-top: 17px; background: #25241f; border-color: #1a1a17; }

.emu { position: absolute; left: 452px; top: 47px; width: 61px; height: 512px; border: 1px solid #000; background: #efefef; display: flex; flex-direction: column; align-items: center; box-shadow: 3px 3px 12px rgba(0,0,0,.2); fill: #607d8b; }
.emu > svg { width: 22px; height: 22px; margin: 11px 1px 11px 0; }
.emu .s { fill: none; stroke: #607d8b; stroke-width: 1.800; }
.winctl { display: flex; width: 60px; height: 22px; padding: 9px 0 0 13px; gap: 17px; }
```
